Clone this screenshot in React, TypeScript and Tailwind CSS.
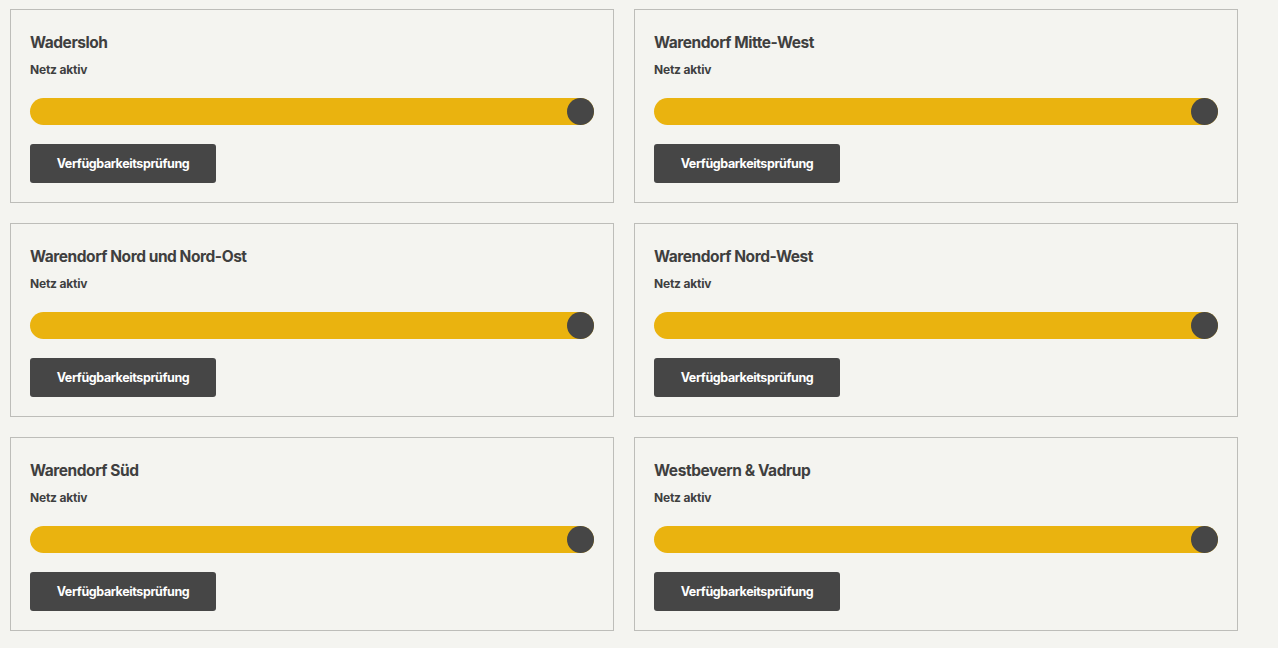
import React from "react";

const items = [
  "Wadersloh",
  "Warendorf Mitte-West",
  "Warendorf Nord und Nord-Ost",
  "Warendorf Nord-West",
  "Warendorf Süd",
  "Westbevern & Vadrup",
];

function Card({ title }: { title: string }) {
  return (
    <div className="border border-[#bdbdb9] px-[19px] pt-[21px] pb-[19px] flex flex-col">
      <h3 className="text-[15.5px] leading-[24px] font-bold text-[#3f3f3f] tracking-[-0.45px]">{title}</h3>
      <p className="mt-[7px] text-[12px] leading-[16px] font-bold text-[#3f3f3f] tracking-[-0.2px]">Netz aktiv</p>
      <div className="mt-[20px] relative h-[27px] rounded-full bg-[#eab30f]">
        <div className="absolute right-0 top-0 w-[27px] h-[27px] rounded-full bg-[#464646]" />
      </div>
      <div className="mt-[19px]">
        <button className="h-[39px] w-[186px] pt-[2px] rounded-[3px] bg-[#464646] text-white text-[12.5px] font-bold tracking-[-0.4px]">
          Verfügbarkeitsprüfung
        </button>
      </div>
    </div>
  );
}

export default function App() {
  return (
    <div
      className="min-h-[648px] w-full bg-[#f4f4f0] pl-[10px] pt-[9px]"
      style={{ fontFamily: "Inter, 'Liberation Sans', sans-serif" }}
    >
      <div className="grid grid-cols-[604px_604px] gap-x-[20px] gap-y-[20px]">
        {items.map((t) => (
          <Card key={t} title={t} />
        ))}
      </div>
    </div>
  );
}
